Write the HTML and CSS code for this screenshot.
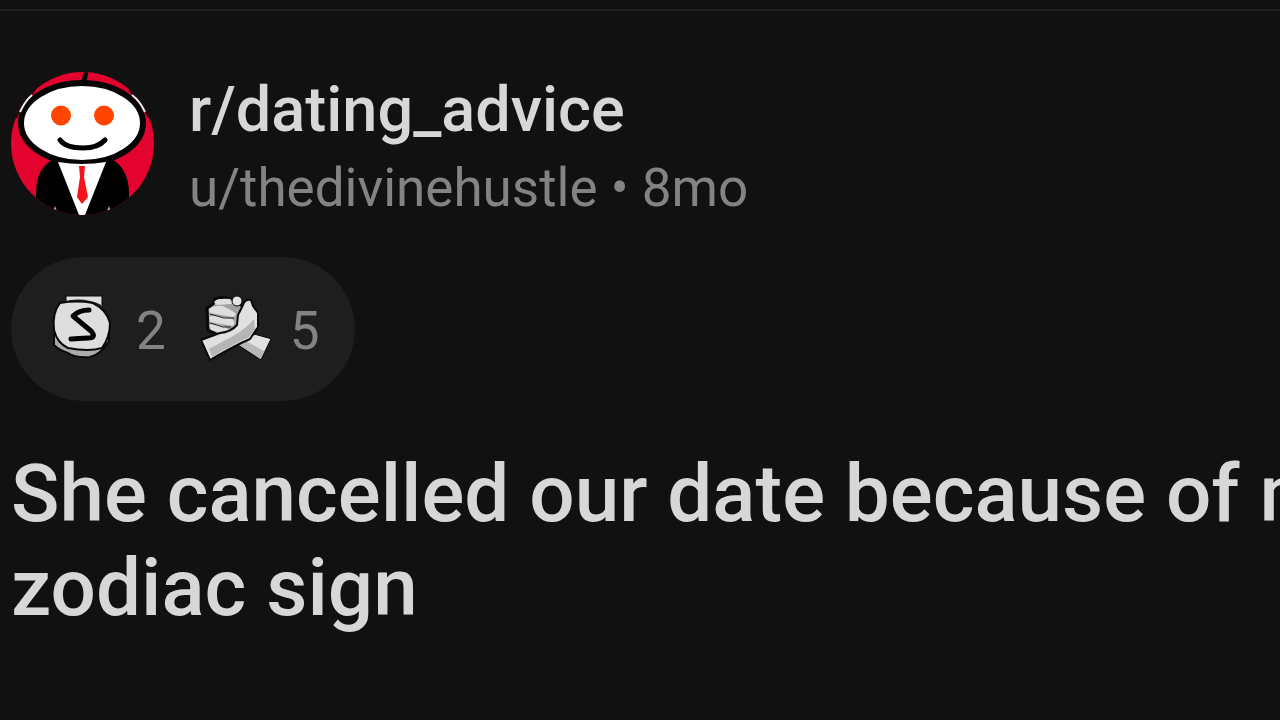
FILE: index.html
```html
<!DOCTYPE html>
<html lang="en">
<head>
<meta charset="utf-8">
<meta name="viewport" content="width=device-width, initial-scale=1">
<title>She cancelled our date because of my zodiac sign</title>
<link rel="stylesheet" href="styles.css">
</head>
<body>
<main class="feed">
  <article class="post">
    <header class="post-header">
      <svg class="avatar" viewBox="0 0 143 143" role="img" aria-label="Community avatar">
        <defs><clipPath id="round"><circle cx="71.500" cy="71.500" r="71.500"/></clipPath></defs>
        <g clip-path="url(#round)">
          <rect width="143" height="143" fill="#e4032e"/>
          <path d="M0 0H28L25 18L12 34L6 46H0Z M143 0H114L118 19L131 34L137 46H143Z" fill="#0c0c0c"/>
          <path d="M75 0L72 14" stroke="#080808" stroke-width="5"/>
          <path d="M25 143V122C25 103 31 93 44 86H98C112 92 118 105 118 122V143Z" fill="#000"/>
          <ellipse cx="71" cy="51" rx="61" ry="40" fill="#fff" stroke="#050505" stroke-width="6"/>
          <path d="M9 40Q14 29 21 23M121 23Q129 29 134 40" fill="none" stroke="#eee" stroke-width="2"/>
          <path d="M47 90Q71 94 95 90L74 143H68Z" fill="#fff"/>
          <path d="M68 94H74L73 105L77 125L71 132L66 125L69 105Z" fill="#f5131c"/>
          <circle cx="50" cy="43.500" r="10" fill="#ff4500"/>
          <circle cx="93" cy="43.500" r="10" fill="#ff4500"/>
          <path d="M49 68Q55 76 72 76Q87 76 94 68" fill="none" stroke="#000" stroke-width="5" stroke-linecap="round"/>
          <path d="M44 134L46 139H42ZM98 134L100 139H96Z" fill="#aaa"/>
        </g>
      </svg>
      <div class="byline">
        <a class="community" href="#community">r/dating_advice</a>
        <p class="meta"><a class="author" href="#author">u/thedivinehustle</a> • 8mo</p>
      </div>
    </header>
    <button class="awards" type="button">
      <span class="award">
        <svg class="award-icon" viewBox="-2 0 72 72" role="img" aria-label="Silver">
          <path d="M18 3H54V14H18Z" fill="#dedede" stroke="#080808" stroke-width="1"/>
          <path d="M14 10Q35 4 53 13" fill="none" stroke="#222" stroke-width="2"/>
          <path d="M6 42V52Q11 57 20 60Q27 65 42 64Q52 62 61 48V35Z" fill="#aaa" stroke="#090909" stroke-width="2"/>
          <path d="M12 10Q29 7 45 10Q59 17 62 30Q62 44 54 55Q41 59 20 55Q9 50 6 37Q4 20 12 10Z" fill="#dedede" stroke="#090909" stroke-width="2"/>
          <path d="M41 17Q31 17 25 23L43 38Q49 45 40 45L23 46" fill="none" stroke="#000" stroke-width="5" stroke-linecap="round" stroke-linejoin="round"/>
        </svg>
        <span class="award-count">2</span>
      </span>
      <span class="award">
        <svg class="award-icon" viewBox="0 0 72 72" role="img" aria-label="Wholesome">
          <path d="M38 52L54 41L71 46L61 67Z" fill="#b8b8b8" stroke="#080808"/>
          <path d="M55 42L70 46L64 58L46 48Z" fill="#e2e2e2"/>
          <path d="M15 6Q20 3 32 6L44 14L40 38L29 42L18 42L8 37L7 15L13 11Z" fill="#a2a2a2" stroke="#080808" stroke-width="3" stroke-linejoin="round"/>
          <path d="M14 9Q17 5 30 6Q34 9 31 11L17 12ZM9 17Q12 12 23 13L34 19Q38 22 33 24L10 20ZM9 24Q13 21 32 26Q36 29 33 33L10 29ZM9 32Q15 29 27 35Q30 39 25 41L11 37Z" fill="#dedede"/>
          <path d="M10 21L24 25L34 25M10 30L23 34L31 34" fill="none" stroke="#222" stroke-width="1"/>
          <path d="M1 47L20 40Q31 39 37 32L38 22L43 12Q45 6 51 7L53 13L58 20L58 34L50 46Q36 52 10 67Z" fill="#e0e0e0" stroke="#080808" stroke-width="2" stroke-linejoin="round"/>
          <circle cx="37" cy="8" r="5" fill="#e4e4e4" stroke="#080808"/>
          <path d="M9 56L33 43Q46 36 54 26L55 36L49 44Q32 52 12 64Z" fill="#b5b5b5"/>
        </svg>
        <span class="award-count">5</span>
      </span>
    </button>
    <h1 class="title">She cancelled our date because of my<br>zodiac sign</h1>
  </article>
</main>
</body>
</html>
```
FILE: styles.css
```css
* {
  box-sizing: border-box;
}

body {
  margin: 0;
  background: #111;
  color: #d5d7d9;
  font-family: Roboto, "Liberation Sans", sans-serif;
}

.feed {
  padding-top: 9px;
  overflow: hidden;
}

.post {
  padding: 61px 11px 0;
  border-top: 2px solid #1e1e1e;
}

.post-header {
  display: flex;
  align-items: flex-start;
  gap: 35px;
}

.avatar {
  flex: none;
  width: 143px;
  height: 143px;
}

.byline {
  display: flex;
  flex-direction: column;
}

.community {
  color: inherit;
  font-size: 63px;
  font-weight: 500;
  line-height: 76px;
  text-decoration: none;
}

.meta {
  margin: 0;
  color: #818384;
  font-size: 53px;
  line-height: 80px;
}

.author {
  color: inherit;
  text-decoration: none;
}

.awards {
  display: flex;
  align-items: center;
  gap: 34px;
  margin-top: 29px;
  padding: 36px 35px;
  border: 0;
  border-radius: 72px;
  background: #1e1e1e;
  color: #818384;
  font: inherit;
  font-size: 53px;
  line-height: 68px;
}

.award {
  display: flex;
  align-items: center;
  gap: 18px;
}

.award-icon {
  flex: none;
  width: 72px;
  height: 72px;
}

.award-count {
  padding-top: 4px;
}

.title {
  margin: 46px 0 0;
  font-size: 80px;
  font-weight: 500;
  line-height: 94px;
  white-space: nowrap;
}
```
